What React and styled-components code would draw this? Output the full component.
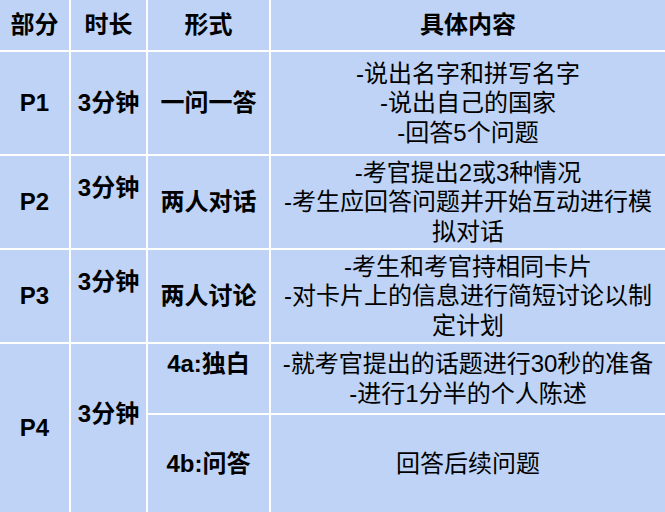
import React from "react";
import styled, { createGlobalStyle } from "styled-components";

const GlobalStyle = createGlobalStyle`
  html, body {
    margin: 0;
    padding: 0;
    background: #ffffff;
  }
  body {
    font-family: "Liberation Sans", "Noto Sans CJK SC", sans-serif;
  }
`;

const Table = styled.div`
  display: grid;
  width: 665px;
  height: 512px;
  grid-template-columns: 69px 75px 121px 394px;
  grid-template-rows: 50px 102px 92px 92px 69px 97px;
  gap: 2px;
  background: #ffffff;
  color: #000000;
`;

const Cell = styled.div`
  display: flex;
  align-items: center;
  justify-content: center;
  text-align: center;
  background: #bed3f5;
  font-size: 24px;
  line-height: 29.5px;
  font-weight: ${(p) => (p.$bold ? 700 : 400)};
  padding: 0 ${(p) => (p.$wide ? "8px" : "0")};
  padding-bottom: ${(p) => (p.$lift ? "29.5px" : "0")};
  grid-row: ${(p) => p.$row || "auto"};
  white-space: ${(p) => (p.$wide ? "normal" : "nowrap")};
  box-sizing: border-box;
`;

const Lines = styled.div`
  display: flex;
  flex-direction: column;
  align-items: center;
`;

const rows = [
  {
    part: "P1",
    time: "3分钟",
    lift: false,
    form: "一问一答",
    lines: ["-说出名字和拼写名字", "-说出自己的国家", "-回答5个问题"],
  },
  {
    part: "P2",
    time: "3分钟",
    lift: true,
    form: "两人对话",
    lines: ["-考官提出2或3种情况", "-考生应回答问题并开始互动进行模拟对话"],
  },
  {
    part: "P3",
    time: "3分钟",
    lift: true,
    form: "两人讨论",
    lines: ["-考生和考官持相同卡片", "-对卡片上的信息进行简短讨论以制定计划"],
  },
];

export default function App() {
  return (
    <>
      <GlobalStyle />
      <Table>
        <Cell $bold>部分</Cell>
        <Cell $bold>时长</Cell>
        <Cell $bold>形式</Cell>
        <Cell $bold>具体内容</Cell>

        {rows.map((r) => (
          <React.Fragment key={r.part}>
            <Cell $bold>{r.part}</Cell>
            <Cell $bold $lift={r.lift}>{r.time}</Cell>
            <Cell $bold>{r.form}</Cell>
            <Cell $wide>
              <Lines>
                {r.lines.map((l) => (
                  <div key={l}>{l}</div>
                ))}
              </Lines>
            </Cell>
          </React.Fragment>
        ))}

        <Cell $bold $row="5 / 7">P4</Cell>
        <Cell $bold $lift $row="5 / 7">3分钟</Cell>
        <Cell $bold $lift>4a:独白</Cell>
        <Cell $wide>
          <Lines>
            <div>-就考官提出的话题进行30秒的准备</div>
            <div>-进行1分半的个人陈述</div>
          </Lines>
        </Cell>
        <Cell $bold>4b:问答</Cell>
        <Cell $wide>回答后续问题</Cell>
      </Table>
    </>
  );
}
